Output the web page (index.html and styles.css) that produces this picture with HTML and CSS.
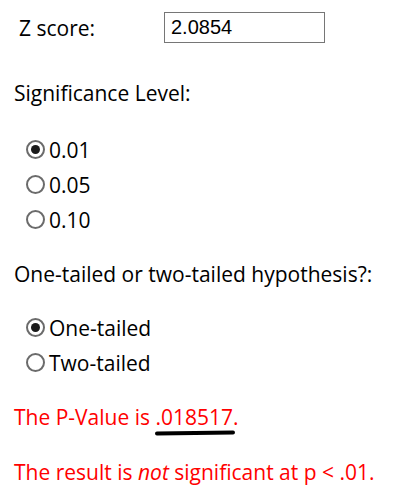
FILE: index.html
```html
<!DOCTYPE html>
<html lang="en">
<head>
  <meta charset="UTF-8" />
  <meta name="viewport" content="width=device-width, initial-scale=1.0"/>
  <title>P-Value Calculator</title>
  <link rel="stylesheet" href="styles.css">
</head>
<body>

<div class="calc">
  <div class="row-z">
    <label class="z-label" for="zscore">Z score:</label>
    <input type="text" id="zscore" value="2.0854" />
  </div>

  <p class="heading">Significance Level:</p>
  <div class="options">
    <label class="opt"><input type="radio" name="sig" checked />0.01</label>
    <label class="opt"><input type="radio" name="sig" />0.05</label>
    <label class="opt"><input type="radio" name="sig" />0.10</label>
  </div>

  <p class="heading">One-tailed or two-tailed hypothesis?:</p>
  <div class="options">
    <label class="opt"><input type="radio" name="tail" checked />One-tailed</label>
    <label class="opt"><input type="radio" name="tail" />Two-tailed</label>
  </div>

  <p class="result">The P-Value is <span class="pval">.018517</span>.</p>
  <p class="result">The result is <em>not</em> significant at p &lt; .01.</p>
</div>

</body>
</html>
```

FILE: styles.css
```css
body {
  font-family: "Open Sans", Arial, sans-serif;
  font-size: 21px;
  color: #000;
  background: #fff;
  margin: 0;
  padding: 0;
}
.calc {
  padding: 12px 14px;
}
.row-z {
  display: flex;
  align-items: center;
  height: 31px;
}
.z-label {
  width: 145px;
  padding-left: 5px;
}
#zscore {
  width: 161px;
  height: 31px;
  box-sizing: border-box;
  border: 1px solid #767676;
  padding: 0 6px;
  font-family: "Liberation Sans", Arial, sans-serif;
  font-size: 20px;
  color: #000;
}
.heading {
  margin: 36px 0 0;
  line-height: 29px;
}
.options {
  margin-top: 24px;
  display: flex;
  flex-direction: column;
}
.heading + .options + .heading {
  margin-top: 23px;
}
.heading + .options + .heading + .options {
  margin-top: 21px;
}
.opt {
  display: flex;
  align-items: center;
  height: 35px;
  padding-left: 12px;
}
.opt input {
  appearance: none;
  width: 19px;
  height: 19px;
  margin: 0 4px 0 0;
  border: 2px solid #6b6b6b;
  border-radius: 50%;
  box-sizing: border-box;
  display: flex;
  align-items: center;
  justify-content: center;
}
.opt input:checked::before {
  content: "";
  width: 9px;
  height: 9px;
  border-radius: 50%;
  background: #1a1a1a;
}
.result {
  color: #ff0000;
  margin: 23px 0 0;
  line-height: 29px;
}
.result + .result {
  margin-top: 26px;
}
.pval {
  position: relative;
}
.pval::after {
  content: "";
  position: absolute;
  left: 0;
  right: -2px;
  bottom: -4px;
  height: 4px;
  background: #000;
  border-radius: 3px;
  transform: rotate(-0.6deg);
}
```
